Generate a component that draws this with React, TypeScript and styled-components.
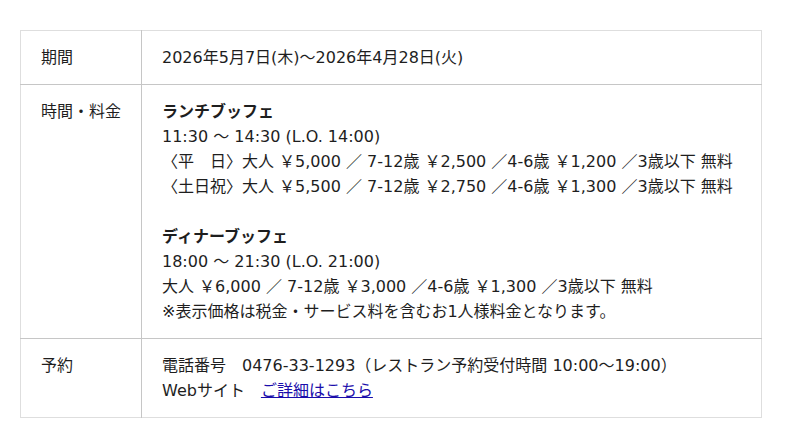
import styled, { createGlobalStyle } from 'styled-components';

const GlobalStyle = createGlobalStyle`
  body {
    margin: 0;
    background: #fff;
    color: #1e1e1e;
    font-family: "DejaVu Sans", "Noto Sans CJK JP", sans-serif;
  }
`;

const Page = styled.div`
  padding: 30px 38px 0 20px;
`;

const Table = styled.table`
  border: 1px solid #dedede;
  border-collapse: collapse;
  font-size: 16px;
  line-height: 25px;
  width: 742px;
`;

const Row = styled.tr`
  &:not(:last-child) {
    border-bottom: 1px solid #c6c6c6;
  }
`;

const Label = styled.th`
  border-right: 1px solid #c6c6c6;
  font-weight: normal;
  padding: 14px 20px;
  text-align: left;
  vertical-align: top;
  width: 80px;
`;

const Cell = styled.td`
  padding: 14px 20px;
  vertical-align: top;
`;

const Heading = styled.div`
  font-weight: bold;
`;

const Gap = styled.div`
  height: 25px;
`;

const Link = styled.a`
  color: #1a0dab;
  margin-left: 1em;
  text-decoration: underline;
`;

const lunch = [
  '11:30 〜 14:30 (L.O. 14:00)',
  '〈平　日〉大人 ￥5,000 ／ 7-12歳 ￥2,500 ／4-6歳 ￥1,200 ／3歳以下 無料',
  '〈土日祝〉大人 ￥5,500 ／ 7-12歳 ￥2,750 ／4-6歳 ￥1,300 ／3歳以下 無料',
];

const dinner = [
  '18:00 〜 21:30 (L.O. 21:00)',
  '大人 ￥6,000 ／ 7-12歳 ￥3,000 ／4-6歳 ￥1,300 ／3歳以下 無料',
  '※表示価格は税金・サービス料を含むお1人様料金となります。',
];

export default function App() {
  return (
    <Page>
      <GlobalStyle />
      <Table>
        <tbody>
          <Row>
            <Label>期間</Label>
            <Cell>2026年5月7日(木)〜2026年4月28日(火)</Cell>
          </Row>
          <Row>
            <Label>時間・料金</Label>
            <Cell>
              <Heading>ランチブッフェ</Heading>
              {lunch.map((line) => (
                <div key={line}>{line}</div>
              ))}
              <Gap />
              <Heading>ディナーブッフェ</Heading>
              {dinner.map((line) => (
                <div key={line}>{line}</div>
              ))}
            </Cell>
          </Row>
          <Row>
            <Label>予約</Label>
            <Cell>
              <div>電話番号　0476-33-1293（レストラン予約受付時間 10:00〜19:00）</div>
              <div>
                Webサイト
                <Link href="#">ご詳細はこちら</Link>
              </div>
            </Cell>
          </Row>
        </tbody>
      </Table>
    </Page>
  );
}
